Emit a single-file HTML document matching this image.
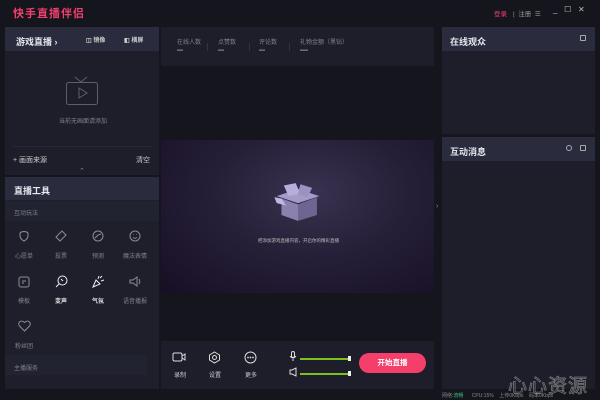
<!DOCTYPE html>
<html><head><meta charset="utf-8"><style>
*{margin:0;padding:0;box-sizing:border-box}
body{width:600px;height:400px;overflow:hidden;background:#15151d;font-family:"Liberation Sans","Noto Sans CJK SC",sans-serif;color:#c8c9d2;position:relative;font-size:6px}
.a{position:absolute}
.pan{background:#1d1e29}
.hd{background:#2a2c3d;color:#e6e7ee;font-size:9px;font-weight:bold}
.g{color:#80828f}
.sv{position:absolute}
.lb{position:absolute;font-size:6px;color:#80828f;width:40px;text-align:center}
</style></head><body>
<div class="a" style="left:13px;top:5px;font-size:11px;font-weight:bold;color:#f0406d;letter-spacing:1px">快手直播伴侣</div>
<div class="a" style="left:494px;top:8px;font-size:6.5px;color:#f0406d">登录</div>
<div class="a" style="left:513px;top:8px;font-size:6.5px;color:#999">|&nbsp; 注册 &nbsp;☰</div>
<div class="a" style="left:553px;top:5px;font-size:8px;color:#bbb">_ &nbsp; ☐ &nbsp; ✕</div>

<div class="a pan" style="left:5px;top:27px;width:154px;height:148px"></div>
<div class="a hd" style="left:5px;top:27px;width:154px;height:24px;padding:8px 0 0 11px">游戏直播 ›</div>
<div class="a" style="left:86px;top:35px;font-size:6px;color:#ccc;font-weight:bold">◫ 镜像</div>
<div class="a" style="left:124px;top:35px;font-size:6px;color:#ccc;font-weight:bold">◧ 横屏</div>
<svg class="sv" style="left:64px;top:76px" width="36" height="30" viewBox="0 0 36 30" fill="none" stroke="#5c5e6a" stroke-width="1"><rect x="2.5" y="6.5" width="31" height="22" rx="2"/><path d="M11 1l6 5 6-5M15 12v10l8-5z"/></svg>
<div class="a g" style="left:59px;top:116px;font-size:6px">当前无画面请添加</div>
<div class="a" style="left:13px;top:146px;width:139px;height:1px;background:#272834"></div>
<div class="a" style="left:13px;top:155px;font-size:7px;color:#ccc">+ 画面来源</div>
<div class="a" style="left:136px;top:155px;font-size:7px;color:#ccc">清空</div>
<div class="a" style="left:79px;top:167px;font-size:7px;color:#888">⌃</div>

<div class="a pan" style="left:5px;top:177px;width:154px;height:212px;background:#1e1f2b"></div>
<div class="a hd" style="left:5px;top:177px;width:154px;height:23px;padding:7px 0 0 9px">直播工具</div>
<div class="a" style="left:5px;top:201px;width:154px;height:20px;background:#222331"></div>
<div class="a g" style="left:14px;top:208px">互动玩法</div>
<div class="a" style="left:5px;top:355px;width:142px;height:20px;background:#222331"></div>
<div class="a g" style="left:14px;top:363px">主播服务</div>

<svg class="sv" style="left:18px;top:230px" width="12" height="12" viewBox="0 0 12 12" fill="none" stroke="#8a8c98"><path d="M2 3c2-2 6-2 8 0v3c0 3-4 5-4 5s-4-2-4-5z"/></svg><div class="lb" style="left:4px;top:251px">心愿单</div>
<svg class="sv" style="left:55px;top:230px" width="12" height="12" viewBox="0 0 12 12" fill="none" stroke="#8a8c98"><path d="M7 1l4 4-6 6-4-4z"/></svg><div class="lb" style="left:41px;top:251px">投票</div>
<svg class="sv" style="left:92px;top:230px" width="12" height="12" viewBox="0 0 12 12" fill="none" stroke="#8a8c98"><circle cx="6" cy="6" r="5"/><path d="M3 8l3-3 3-1"/></svg><div class="lb" style="left:78px;top:251px">预测</div>
<svg class="sv" style="left:129px;top:230px" width="12" height="12" viewBox="0 0 12 12" fill="none" stroke="#8a8c98"><circle cx="6" cy="6" r="5"/><path d="M4 7.5q2 1.5 4 0M4.5 4.5v.5M7.5 4.5v.5"/></svg><div class="lb" style="left:115px;top:251px">魔法表情</div>
<svg class="sv" style="left:18px;top:276px" width="12" height="12" viewBox="0 0 12 12" fill="none" stroke="#8a8c98"><rect x="1" y="1" width="10" height="10" rx="2"/><path d="M4 5h4M4 7h2"/></svg><div class="lb" style="left:4px;top:296px">模板</div>
<svg class="sv" style="left:55px;top:275px" width="13" height="13" viewBox="0 0 13 13" fill="none" stroke="#eee"><circle cx="7.5" cy="5.5" r="4.5"/><path d="M4.5 8.5L1 12M6 4l2 2"/></svg><div class="lb" style="left:41px;top:296px;color:#ddd;font-weight:bold">变声</div>
<svg class="sv" style="left:92px;top:275px" width="13" height="13" viewBox="0 0 13 13" fill="none" stroke="#eee"><path d="M1 12l3-7 4 4zM6 4l1-3M9 6l3-1M8 3l2-2"/></svg><div class="lb" style="left:78px;top:296px;color:#ddd;font-weight:bold">气氛</div>
<svg class="sv" style="left:129px;top:275px" width="13" height="13" viewBox="0 0 13 13" fill="none" stroke="#8a8c98"><path d="M1 5h3l4-3v9L4 8H1zM10 4q1.5 2.5 0 5"/></svg><div class="lb" style="left:115px;top:296px">语音播报</div>
<svg class="sv" style="left:18px;top:320px" width="13" height="12" viewBox="0 0 13 12" fill="none" stroke="#8a8c98"><path d="M6.5 11L1.5 6C-1 3 3-1 6.5 2.5 10-1 14 3 11.5 6z"/></svg><div class="lb" style="left:4px;top:341px">粉丝团</div>

<div class="a pan" style="left:161px;top:27px;width:273px;height:39px"></div>
<div class="a g" style="left:177px;top:37px">在线人数</div><div class="a" style="left:177px;top:48px;color:#ddd;font-weight:bold">---</div>
<div class="a g" style="left:218px;top:37px">点赞数</div><div class="a" style="left:218px;top:48px;color:#ddd;font-weight:bold">---</div>
<div class="a g" style="left:259px;top:37px">评论数</div><div class="a" style="left:259px;top:48px;color:#ddd;font-weight:bold">---</div>
<div class="a g" style="left:300px;top:37px">礼物金额（黑钻）</div><div class="a" style="left:300px;top:48px;color:#ddd;font-weight:bold">----</div>
<div class="a" style="left:207px;top:43px;width:1px;height:8px;background:#333"></div>
<div class="a" style="left:249px;top:43px;width:1px;height:8px;background:#333"></div>
<div class="a" style="left:289px;top:43px;width:1px;height:8px;background:#333"></div>

<div class="a" style="left:161px;top:140px;width:273px;height:153px;background:radial-gradient(ellipse at 55% 35%,#3a3350 0%,#251f38 45%,#170f24 100%)"></div>
<svg class="sv" style="left:272px;top:181px" width="52" height="42" viewBox="0 0 44 34"><polygon points="4,12 22,6 40,12 22,18" fill="#a59ac8"/><polygon points="8,14 22,19 22,33 8,28" fill="#8b80ae"/><polygon points="22,19 38,13 38,28 22,33" fill="#6f6592"/><polygon points="10,3 20,1 24,10 14,12" fill="#b8aedb"/><polygon points="24,2 34,5 30,13 22,10" fill="#9c91c2"/><polygon points="2,13 8,14 12,20 4,18" fill="#c0b6e0"/></svg>
<div class="a" style="left:258px;top:238px;font-size:4.5px;color:#bbb">把添加游戏直播内容，开启你的精彩直播</div>
<div class="a" style="left:436px;top:203px;font-size:7px;color:#888">›</div>

<div class="a pan" style="left:161px;top:341px;width:273px;height:48px"></div>
<svg class="sv" style="left:172px;top:351px" width="14" height="12" viewBox="0 0 14 12" fill="none" stroke="#ddd"><rect x="1" y="2" width="9" height="8" rx="1.5"/><path d="M10 5l3-2v6l-3-2"/></svg><div class="a" style="left:174px;top:370px;font-size:6px;color:#ccc">录制</div>
<svg class="sv" style="left:208px;top:351px" width="13" height="13" viewBox="0 0 13 13" fill="none" stroke="#ddd"><path d="M6.5 1l5 3v5l-5 3-5-3V4z"/><circle cx="6.5" cy="6.5" r="2"/></svg><div class="a" style="left:209px;top:370px;font-size:6px;color:#ccc">设置</div>
<svg class="sv" style="left:244px;top:351px" width="13" height="13" viewBox="0 0 13 13" fill="none" stroke="#ddd"><circle cx="6.5" cy="6.5" r="5.5"/><circle cx="4" cy="6.5" r=".4"/><circle cx="6.5" cy="6.5" r=".4"/><circle cx="9" cy="6.5" r=".4"/></svg><div class="a" style="left:245px;top:370px;font-size:6px;color:#ccc">更多</div>
<svg class="sv" style="left:289px;top:351px" width="8" height="10" viewBox="0 0 8 10" fill="none" stroke="#ddd"><rect x="2.5" y=".5" width="3" height="6" rx="1.5"/><path d="M1 5q3 4 6 0M4 8v2"/></svg>
<svg class="sv" style="left:289px;top:367px" width="8" height="10" viewBox="0 0 8 10" fill="none" stroke="#ddd"><path d="M1 3h2l4-2v8L3 7H1z"/></svg>
<div class="a" style="left:300px;top:358px;width:50px;height:2px;background:#7cc21c"></div>
<div class="a" style="left:348px;top:356px;width:3px;height:5px;background:#eee"></div>
<div class="a" style="left:300px;top:373px;width:50px;height:2px;background:#7cc21c"></div>
<div class="a" style="left:348px;top:371px;width:3px;height:5px;background:#eee"></div>
<div class="a" style="left:359px;top:353px;width:67px;height:20px;border-radius:10px;background:#f43f6b;color:#fff;font-size:7.5px;font-weight:bold;text-align:center;line-height:20px">开始直播</div>

<div class="a pan" style="left:442px;top:27px;width:153px;height:107px"></div>
<div class="a hd" style="left:442px;top:27px;width:153px;height:24px;padding:8px 0 0 8px">在线观众</div>
<div class="a" style="left:580px;top:35px;width:6px;height:6px;border:1px solid #aaa;border-radius:1px"></div>
<div class="a pan" style="left:442px;top:137px;width:153px;height:252px"></div>
<div class="a hd" style="left:442px;top:137px;width:153px;height:24px;padding:8px 0 0 8px">互动消息</div>
<div class="a" style="left:566px;top:145px;width:6px;height:6px;border:1px solid #aaa;border-radius:50%"></div>
<div class="a" style="left:580px;top:145px;width:6px;height:6px;border:1px solid #aaa;border-radius:1px"></div>

<div class="a" style="left:442px;top:392px;font-size:5px;color:#888">网络:<span style="color:#3ac27a">流畅</span> &nbsp;&nbsp;&nbsp;&nbsp; CPU:15% &nbsp;&nbsp; 上传0Kbps &nbsp;&nbsp; 码率0Kbps</div>
<div class="a" style="left:508px;top:371px;font-size:19px;color:transparent;-webkit-text-stroke:0.8px rgba(190,190,190,.55);letter-spacing:1px">心心资源</div>
</body></html>
